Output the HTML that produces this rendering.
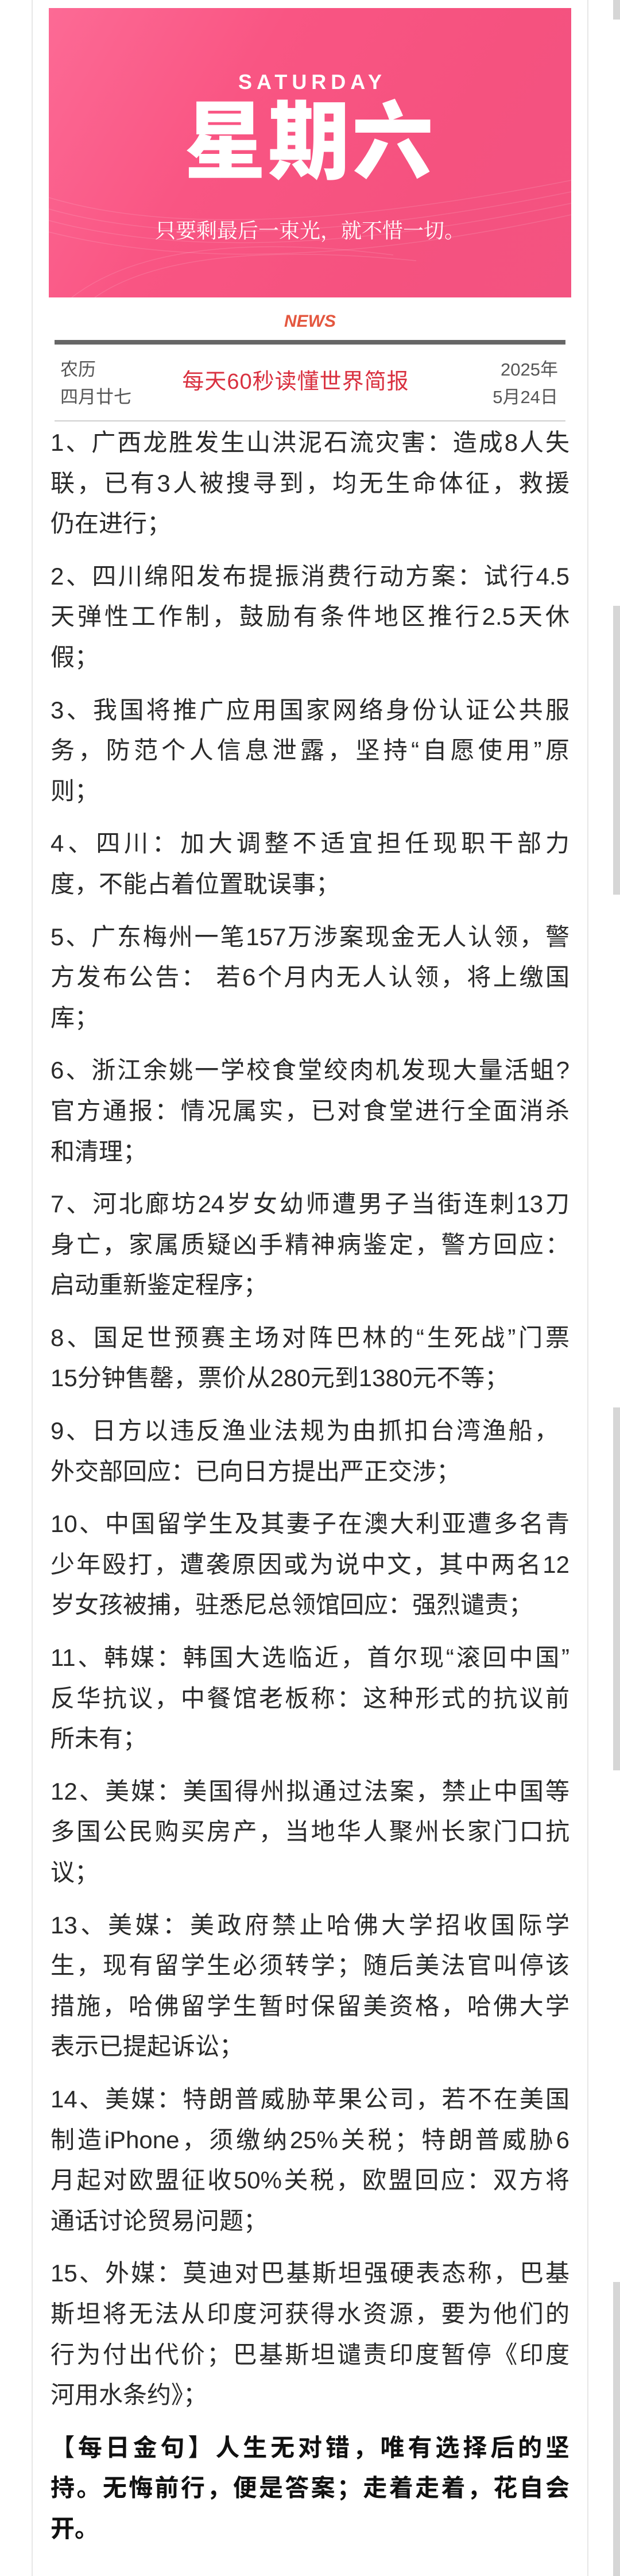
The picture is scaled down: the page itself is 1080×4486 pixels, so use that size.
<!DOCTYPE html>
<html><head><meta charset="utf-8">
<style>
*{margin:0;padding:0;box-sizing:border-box}
html,body{width:1080px;height:4486px;background:#fff;overflow:hidden}
body{position:relative;font-family:"Liberation Sans","Noto Sans CJK SC",sans-serif}
.card{position:absolute;left:55px;top:0;width:970px;height:4486px;border-left:2px solid #e6e6e6;border-right:2px solid #e6e6e6}
.banner{position:absolute;left:85px;top:14px;width:910px;height:504px;background:linear-gradient(120deg,#fc6a95 0%,#f95583 35%,#f5527f 70%,#f35381 100%);overflow:hidden}
.sat{position:absolute;left:0;width:100%;top:108px;text-align:center;color:#fff;font-size:36px;font-weight:bold;letter-spacing:8px;padding-left:8px}
.xq{position:absolute;left:0;width:100%;top:140px;text-align:center;color:#fff;font-family:"Liberation Sans","Noto Sans CJK SC",sans-serif;font-weight:900;font-size:142px;line-height:190px;letter-spacing:4px;transform:scaleY(1.05)}
.tag{position:absolute;left:0;width:100%;top:368px;text-align:center;color:#fff;font-family:"Liberation Serif","Noto Serif CJK SC",serif;font-size:36px;line-height:40px}
.news{position:absolute;left:0;width:1080px;top:540px;text-align:center;color:#e4573f;font-size:30px;font-weight:bold;font-style:italic;line-height:40px}
.bar{position:absolute;left:95px;width:890px;top:592px;height:8px;background:#666}
.sep{position:absolute;left:95px;width:890px;top:732px;height:2px;background:#cfcfcf}
.l{position:absolute;color:#555;font-size:31px;line-height:40px}
.title{position:absolute;left:0;width:1080px;top:640px;text-align:center;color:#d9303f;font-family:"Liberation Sans","WenQuanYi Zen Hei",sans-serif;font-size:38px;line-height:50px;letter-spacing:1px;padding-right:50px}
.txt{position:absolute;left:88px;top:736px;width:904px;color:#2a2a2a;font-size:42px;line-height:70.6px}
.p{margin-bottom:21px}
.p span{display:block;white-space:nowrap}
.p span.j{text-align:justify;text-align-last:justify}
.q{font-weight:bold;color:#111;margin-top:2px}
.sb{position:absolute;left:1068px;width:12px;background:#d6d6d6}
</style></head><body>
<div class="card"></div>
<div class="sb" style="top:0;height:34px"></div>
<div class="sb" style="top:1055px;height:503px"></div>
<div class="sb" style="top:2451px;height:632px"></div>
<div class="sb" style="top:3974px;height:512px"></div>
<div class="banner">
<svg width="910" height="504" style="position:absolute;left:0;top:0" viewBox="0 0 910 504">
<g fill="none" stroke="#ffffff" stroke-opacity="0.13" stroke-width="1.5">
<path d="M0 330 Q300 420 910 300"/><path d="M0 350 Q320 440 910 320"/><path d="M0 370 Q340 460 910 340"/><path d="M0 390 Q360 480 910 360"/><path d="M40 504 Q200 380 600 430"/><path d="M80 504 Q230 400 640 440"/>
</g></svg>
<div class="sat">SATURDAY</div>
<div class="xq">星期六</div>
<div class="tag">只要剩最后一束光，就不惜一切。</div>
</div>
<div class="news">NEWS</div>
<div class="bar"></div>
<div class="l" style="left:105px;top:624px">农历</div>
<div class="l" style="left:105px;top:672px">四月廿七</div>
<div class="l" style="right:108px;top:624px;text-align:right">2025年</div>
<div class="l" style="right:108px;top:672px;text-align:right">5月24日</div>
<div class="title">每天60秒读懂世界简报</div>
<div class="sep"></div>
<div class="txt">
<div class="p"><span class="j">1、广西龙胜发生山洪泥石流灾害：造成8人失</span><span class="j">联，已有3人被搜寻到，均无生命体征，救援</span><span>仍在进行；</span></div>
<div class="p"><span class="j">2、四川绵阳发布提振消费行动方案：试行4.5</span><span class="j">天弹性工作制，鼓励有条件地区推行2.5天休</span><span>假；</span></div>
<div class="p"><span class="j">3、我国将推广应用国家网络身份认证公共服</span><span class="j">务，防范个人信息泄露，坚持“自愿使用”原</span><span>则；</span></div>
<div class="p"><span class="j">4、四川：加大调整不适宜担任现职干部力</span><span>度，不能占着位置耽误事；</span></div>
<div class="p"><span class="j">5、广东梅州一笔157万涉案现金无人认领，警</span><span class="j">方发布公告： 若6个月内无人认领，将上缴国</span><span>库；</span></div>
<div class="p"><span class="j">6、浙江余姚一学校食堂绞肉机发现大量活蛆?</span><span class="j">官方通报：情况属实，已对食堂进行全面消杀</span><span>和清理；</span></div>
<div class="p"><span class="j">7、河北廊坊24岁女幼师遭男子当街连刺13刀</span><span class="j">身亡，家属质疑凶手精神病鉴定，警方回应：</span><span>启动重新鉴定程序；</span></div>
<div class="p"><span class="j">8、国足世预赛主场对阵巴林的“生死战”门票</span><span>15分钟售罄，票价从280元到1380元不等；</span></div>
<div class="p"><span class="j" style="width:885px">9、日方以违反渔业法规为由抓扣台湾渔船，</span><span>外交部回应：已向日方提出严正交涉；</span></div>
<div class="p"><span class="j">10、中国留学生及其妻子在澳大利亚遭多名青</span><span class="j">少年殴打，遭袭原因或为说中文，其中两名12</span><span>岁女孩被捕，驻悉尼总领馆回应：强烈谴责；</span></div>
<div class="p"><span class="j">11、韩媒：韩国大选临近，首尔现“滚回中国”</span><span class="j">反华抗议，中餐馆老板称：这种形式的抗议前</span><span>所未有；</span></div>
<div class="p"><span class="j">12、美媒：美国得州拟通过法案，禁止中国等</span><span class="j">多国公民购买房产，当地华人聚州长家门口抗</span><span>议；</span></div>
<div class="p"><span class="j">13、美媒：美政府禁止哈佛大学招收国际学</span><span class="j">生，现有留学生必须转学；随后美法官叫停该</span><span class="j">措施，哈佛留学生暂时保留美资格，哈佛大学</span><span>表示已提起诉讼；</span></div>
<div class="p"><span class="j">14、美媒：特朗普威胁苹果公司，若不在美国</span><span class="j">制造iPhone，须缴纳25%关税；特朗普威胁6</span><span class="j">月起对欧盟征收50%关税，欧盟回应：双方将</span><span>通话讨论贸易问题；</span></div>
<div class="p"><span class="j">15、外媒：莫迪对巴基斯坦强硬表态称，巴基</span><span class="j">斯坦将无法从印度河获得水资源，要为他们的</span><span class="j">行为付出代价；巴基斯坦谴责印度暂停《印度</span><span>河用水条约》；</span></div>
<div class="p q"><span class="j">【每日金句】人生无对错，唯有选择后的坚</span><span class="j">持。无悔前行，便是答案；走着走着，花自会</span><span>开。</span></div>
</div>
</body></html>
